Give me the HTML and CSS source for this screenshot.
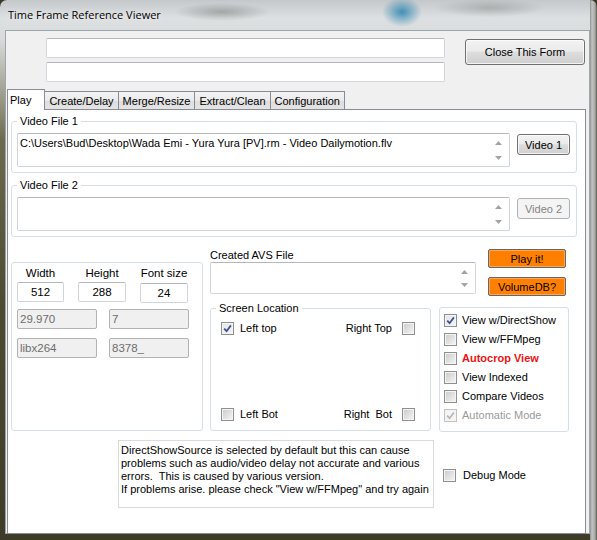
FILE: index.html
```html
<!DOCTYPE html>
<html lang="en">
<head>
    <meta charset="UTF-8">
    <title>Time Frame Reference Viewer</title>
    <link rel="stylesheet" href="styles.css">
</head>
<body>
<div class="window">
    <div class="titlebar">Time Frame Reference Viewer</div>
    <div class="client">
        <div class="top">
            <div class="top-fields">
                <div class="textbox top-box"></div>
                <div class="textbox top-box"></div>
            </div>
            <button class="btn close-btn">Close This Form</button>
        </div>

        <div class="tabs">
            <div class="tab active">Play</div>
            <div class="tab">Create/Delay</div>
            <div class="tab">Merge/Resize</div>
            <div class="tab">Extract/Clean</div>
            <div class="tab">Configuration</div>
        </div>

        <div class="tabpage">
            <fieldset class="group file-group">
                <legend>Video File 1</legend>
                <div class="file-row">
                    <div class="memo file-memo">
                        <div class="memo-text">C:\Users\Bud\Desktop\Wada Emi - Yura Yura [PV].rm - Video Dailymotion.flv</div>
                        <div class="scroll">
                            <svg width="7" height="4" viewBox="0 0 7 4"><path d="M0 4 L3.5 0 L7 4 Z" fill="#a3a3a3"/></svg>
                            <svg width="7" height="4" viewBox="0 0 7 4"><path d="M0 0 L3.5 4 L7 0 Z" fill="#a3a3a3"/></svg>
                        </div>
                    </div>
                    <button class="btn video-btn">Video 1</button>
                </div>
            </fieldset>

            <fieldset class="group file-group second">
                <legend>Video File 2</legend>
                <div class="file-row">
                    <div class="memo file-memo">
                        <div class="memo-text"></div>
                        <div class="scroll">
                            <svg width="7" height="4" viewBox="0 0 7 4"><path d="M0 4 L3.5 0 L7 4 Z" fill="#a3a3a3"/></svg>
                            <svg width="7" height="4" viewBox="0 0 7 4"><path d="M0 0 L3.5 4 L7 0 Z" fill="#a3a3a3"/></svg>
                        </div>
                    </div>
                    <button class="btn video-btn disabled">Video 2</button>
                </div>
            </fieldset>

            <div class="lower">
                <div class="box size-box">
                    <div class="size-grid">
                        <div class="size-col">
                            <div class="size-label">Width</div>
                            <div class="textbox num-box w1">512</div>
                        </div>
                        <div class="size-col">
                            <div class="size-label">Height</div>
                            <div class="textbox num-box w2">288</div>
                        </div>
                        <div class="size-col">
                            <div class="size-label">Font size</div>
                            <div class="textbox num-box w2 low">24</div>
                        </div>
                    </div>
                    <div class="info-row">
                        <div class="textbox info-box">29.970</div>
                        <div class="textbox info-box">7</div>
                    </div>
                    <div class="info-row">
                        <div class="textbox info-box">libx264</div>
                        <div class="textbox info-box">8378_</div>
                    </div>
                </div>

                <div class="middle">
                    <div class="avs-row">
                        <div class="avs">
                            <div class="avs-label">Created AVS File</div>
                            <div class="memo avs-memo">
                                <div class="memo-text"></div>
                                <div class="scroll">
                                    <svg width="7" height="4" viewBox="0 0 7 4"><path d="M0 4 L3.5 0 L7 4 Z" fill="#a3a3a3"/></svg>
                                    <svg width="7" height="4" viewBox="0 0 7 4"><path d="M0 0 L3.5 4 L7 0 Z" fill="#a3a3a3"/></svg>
                                </div>
                            </div>
                        </div>
                        <div class="orange-col">
                            <button class="btn orange">Play it!</button>
                            <button class="btn orange">VolumeDB?</button>
                        </div>
                    </div>

                    <div class="options-row">
                        <fieldset class="group screen-loc">
                            <legend>Screen Location</legend>
                            <div class="loc-grid">
                                <div class="loc-row">
                                    <div class="check">
                                        <span class="chk checked"><svg width="9" height="9" viewBox="0 0 9 9"><path d="M1.2 4.6 L3.6 7.2 L7.9 1.4" fill="none" stroke="#3d5393" stroke-width="1.8"/></svg></span>
                                        <span>Left top</span>
                                    </div>
                                    <div class="check right">
                                        <span>Right Top</span>
                                        <span class="chk"></span>
                                    </div>
                                </div>
                                <div class="loc-row">
                                    <div class="check">
                                        <span class="chk"></span>
                                        <span>Left Bot</span>
                                    </div>
                                    <div class="check right">
                                        <span>Right&nbsp; Bot</span>
                                        <span class="chk"></span>
                                    </div>
                                </div>
                            </div>
                        </fieldset>

                        <div class="box options">
                            <div class="check opt">
                                <span class="chk checked"><svg width="9" height="9" viewBox="0 0 9 9"><path d="M1.2 4.6 L3.6 7.2 L7.9 1.4" fill="none" stroke="#3d5393" stroke-width="1.8"/></svg></span>
                                <span>View w/DirectShow</span>
                            </div>
                            <div class="check opt">
                                <span class="chk"></span>
                                <span>View w/FFMpeg</span>
                            </div>
                            <div class="check opt">
                                <span class="chk"></span>
                                <span class="red">Autocrop View</span>
                            </div>
                            <div class="check opt">
                                <span class="chk"></span>
                                <span>View Indexed</span>
                            </div>
                            <div class="check opt">
                                <span class="chk"></span>
                                <span>Compare Videos</span>
                            </div>
                            <div class="check opt off">
                                <span class="chk checked"><svg width="9" height="9" viewBox="0 0 9 9"><path d="M1.2 4.6 L3.6 7.2 L7.9 1.4" fill="none" stroke="#b4b4b4" stroke-width="1.6"/></svg></span>
                                <span>Automatic Mode</span>
                            </div>
                        </div>
                    </div>
                </div>
            </div>

            <div class="note-row">
                <div class="note">
                    DirectShowSource is selected by default but this can cause<br>
                    problems such as audio/video delay not accurate and various<br>
                    errors.&nbsp; This is caused by various version.<br>
                    If problems arise. please check "View w/FFMpeg" and try again
                </div>
                <div class="check debug">
                    <span class="chk"></span>
                    <span>Debug Mode</span>
                </div>
            </div>
        </div>
    </div>
</div>
</body>
</html>
```

FILE: styles.css
```css
body {
    margin: 0;
    background: #3b3a28;
    font-family: "Liberation Sans", Arial, sans-serif;
    font-size: 11px;
    color: #000;
}
.window {
    width: 597px;
    height: 540px;
    box-sizing: border-box;
    padding: 0 7px 6px 5px;
    border-radius: 7px 7px 0 0;
    background:
        linear-gradient(to right, rgba(0,0,0,0) 590px, #8d8f8f 590px, #c3c5c5 592px, #a7a8a8 595px, #5c5b48 597px),
        radial-gradient(ellipse 20px 15px at 402px 12px, rgba(40,130,175,0.85), rgba(40,130,175,0)),
        radial-gradient(ellipse 48px 9px at 222px 12px, rgba(50,50,50,0.3), rgba(50,50,50,0)),
        radial-gradient(ellipse 55px 9px at 490px 8px, rgba(70,70,70,0.25), rgba(70,70,70,0)),
        linear-gradient(to bottom, #c4c8ca 0, #dde0e2 18px, #d8dadb 40px, #aeae9f 80px, #6d6b4d 140px, #4d4b31 300px, #3e3c27 100%);
}
.titlebar {
    height: 30px;
    line-height: 30px;
    padding-left: 3px;
    font-family: "Open Sans", "Liberation Sans", sans-serif;
    font-size: 11px;
    text-shadow: 0 0 6px rgba(255,255,255,0.9);
}
.client {
    height: 504px;
    box-sizing: border-box;
    background: #f0f0f0;
    border: 1px solid #9ea6ad;
    padding-top: 7px;
}

/* header */
.top {
    display: flex;
    padding-left: 40px;
}
.top-fields {
    display: flex;
    flex-direction: column;
    gap: 4px;
}
.textbox {
    box-sizing: border-box;
    background: #fff;
    border: 1px solid #d2d5d9;
    border-top-color: #b4b7bd;
    border-radius: 2px;
}
.top-box {
    width: 399px;
    height: 20px;
}
.btn {
    font: inherit;
    color: #000;
    box-sizing: border-box;
    padding: 0;
    border: 1px solid #707070;
    border-radius: 3px;
    background: linear-gradient(to bottom, #f2f2f2 0%, #ebebeb 45%, #dddddd 52%, #cfcfcf 100%);
    box-shadow: inset 0 0 0 1px rgba(255,255,255,0.75);
}
.close-btn {
    width: 120px;
    height: 26px;
    margin: 1px 0 0 20px;
}

/* tabs */
.tabs {
    display: flex;
    align-items: flex-end;
    height: 21px;
    margin: 6px 0 0 1px;
    position: relative;
    z-index: 1;
}
.tab {
    height: 18px;
    line-height: 18px;
    box-sizing: border-box;
    padding: 0 4px;
    margin-left: -1px;
    border: 1px solid #898c95;
    border-bottom: none;
    background: linear-gradient(to bottom, #f3f3f3 0%, #ebebeb 50%, #dddddd 51%, #e4e4e4 100%);
}
.tab.active {
    height: 21px;
    line-height: 20px;
    margin-left: 0;
    padding: 0 13px 0 2px;
    background: #fff;
    margin-bottom: -1px;
}
.tabpage {
    width: 579px;
    height: 425px;
    margin-left: 1px;
    box-sizing: border-box;
    border: 1px solid #898c95;
    background: #fff;
    padding: 5px 0 0 3px;
}

/* group boxes */
.group {
    margin: 0;
    padding: 0;
    min-inline-size: 0;
    border: 1px solid #d5dfe5;
    border-radius: 3px;
}
.group legend {
    padding: 0 3px;
    line-height: 13px;
}
.box {
    box-sizing: border-box;
    border: 1px solid #d5dfe5;
    border-radius: 3px;
}
.file-group {
    width: 566px;
    box-sizing: border-box;
    padding: 5px 0 5px 5px;
}
.file-group.second {
    margin-top: 6px;
}
.file-row {
    display: flex;
    align-items: flex-start;
}
.memo {
    display: flex;
    box-sizing: border-box;
    background: #fff;
    border: 1px solid #d2d5d9;
    border-top-color: #b4b7bd;
    border-radius: 2px;
}
.memo-text {
    flex: 1;
    padding: 3px 0 0 2px;
    white-space: nowrap;
    overflow: hidden;
}
.scroll {
    width: 17px;
    margin-right: 2px;
    display: flex;
    flex-direction: column;
    justify-content: space-between;
    align-items: center;
    padding: 7px 0 6px;
}
.file-memo {
    width: 493px;
    height: 34px;
}
.video-btn {
    width: 53px;
    height: 21px;
    margin: 1px 0 0 7px;
}
.btn.disabled {
    border-color: #adb2b5;
    background: #f4f4f4;
    color: #838383;
    box-shadow: none;
}

/* lower part */
.lower {
    display: flex;
    align-items: flex-start;
}
.size-box {
    width: 192px;
    height: 169px;
    margin-top: 25px;
    padding: 4px 0 0 5px;
}
.size-grid {
    display: flex;
    gap: 14px;
}
.size-col {
    display: flex;
    flex-direction: column;
    align-items: center;
}
.size-label {
    line-height: 13px;
    font-size: 11.5px;
    margin-bottom: 2px;
}
.num-box {
    height: 20px;
    line-height: 18px;
    text-align: center;
    font-size: 11.5px;
}
.w1 {
    width: 47px;
}
.w2 {
    width: 48px;
}
.low {
    margin-top: 1px;
}
.info-row {
    display: flex;
    gap: 12px;
    margin-top: 6px;
}
.info-row + .info-row {
    margin-top: 9px;
}
.info-box {
    width: 80px;
    height: 20px;
    line-height: 18px;
    padding-left: 2px;
    background: #f0f0f0;
    border: 1px solid #b3b3b3;
    color: #6d6d6d;
    font-size: 11.5px;
}
.middle {
    margin: 11px 0 0 7px;
}
.avs-row {
    display: flex;
    align-items: flex-start;
}
.avs-label {
    line-height: 14px;
}
.avs-memo {
    width: 266px;
    height: 32px;
}
.orange-col {
    display: flex;
    flex-direction: column;
    gap: 9px;
    margin: 1px 0 0 12px;
}
.btn.orange {
    width: 78px;
    height: 19px;
    border-radius: 2px;
    border-color: #666;
    background: #ff8000;
    box-shadow: inset 0 0 0 1px #ffa452;
}
.options-row {
    display: flex;
    align-items: flex-start;
    margin-top: 6px;
}
.screen-loc {
    width: 221px;
    box-sizing: border-box;
    padding: 7px 15px 9px 10px;
}
.screen-loc legend {
    margin-left: -5px;
}
.loc-grid {
    height: 99px;
    display: flex;
    flex-direction: column;
    justify-content: space-between;
}
.loc-row {
    display: flex;
    justify-content: space-between;
}
.check {
    display: flex;
    align-items: center;
    gap: 6px;
    line-height: 13px;
    white-space: nowrap;
}
.check.right {
    gap: 10px;
}
.chk {
    flex: none;
    width: 13px;
    height: 13px;
    box-sizing: border-box;
    border: 1px solid #8e8f8f;
    background: linear-gradient(135deg, #c9c9c9 0%, #e2e2e2 55%, #f7f7f7 100%);
    box-shadow: inset 0 0 0 1px #f4f4f4;
    display: flex;
    align-items: center;
    justify-content: center;
}
.chk.checked {
    background: linear-gradient(135deg, #e4e4e4 0%, #f6f6f6 100%);
}
.options {
    width: 130px;
    height: 125px;
    margin: 5px 0 0 8px;
    padding: 3px 0 0 4px;
}
.opt {
    height: 19px;
    gap: 5px;
}
.off {
    color: #9a9a9a;
}
.off .chk {
    border-color: #c2c2c2;
    background: #f4f4f4;
}
.red {
    color: #ee1111;
    font-weight: bold;
}

/* bottom note */
.note-row {
    display: flex;
    align-items: center;
    margin: 8px 0 0 107px;
}
.note {
    width: 316px;
    height: 68px;
    box-sizing: border-box;
    border: 1px solid #d8dadc;
    padding: 3px 0 0 2px;
    line-height: 13px;
    white-space: nowrap;
}
.debug {
    margin: 2px 0 0 9px;
    gap: 7px;
}
```
